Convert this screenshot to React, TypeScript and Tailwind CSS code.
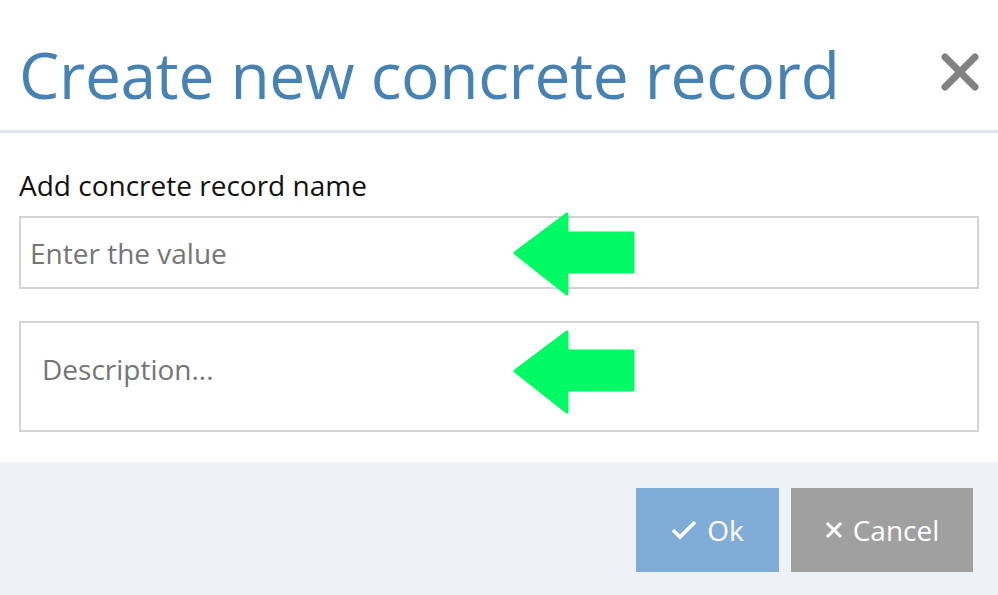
const font = { fontFamily: '"Open Sans", "Liberation Sans", sans-serif' }

function GreenArrow() {
  return (
    <svg width="122" height="84" viewBox="0 0 122 84" className="pointer-events-none">
      <polygon
        points="2,41 54,2 54,21 120,21 120,60 54,60 54,82"
        fill="#00fa64"
        stroke="#00fa64"
        strokeWidth="3"
        strokeLinejoin="round"
      />
    </svg>
  )
}

export default function App() {
  return (
    <div className="w-[998px] h-[595px] bg-white flex flex-col overflow-hidden" style={font}>
      {/* Header */}
      <div className="flex items-start justify-between pl-[19px] pr-[19px] pt-[43px] pb-[23px] border-b-[3px] border-[#e3e4f2]">
        <h1 className="text-[64px] leading-[64px] text-[#4682b4] font-normal tracking-[-0.28px]">
          Create new concrete record
        </h1>
        <button className="mt-[10px]" aria-label="Close">
          <svg width="38" height="38" viewBox="0 0 38 38">
            <path d="M4 4 L34 34 M34 4 L4 34" stroke="#828282" strokeWidth="7" strokeLinecap="round" />
          </svg>
        </button>
      </div>

      {/* Body */}
      <div className="flex flex-col px-[19px] pt-[37px] pb-[30px]">
        <label className="text-[28px] leading-[30px] text-[#111]">Add concrete record name</label>
        <div className="relative mt-[16px]">
          <input
            placeholder="Enter the value"
            className="w-full h-[73px] border-2 border-[#d4d4d4] px-[9px] text-[28px] text-[#333] placeholder:text-[#757575] outline-none"
            style={font}
          />
          <div className="absolute left-[494px] top-[-4px]">
            <GreenArrow />
          </div>
        </div>
        <div className="relative mt-[32px]">
          <textarea
            placeholder="Description..."
            className="block w-full h-[111px] border-2 border-[#d4d4d4] px-[21px] pt-[28px] text-[28px] leading-[36px] text-[#333] placeholder:text-[#757575] outline-none resize-none"
            style={font}
          />
          <div className="absolute left-[494px] top-[9px]">
            <GreenArrow />
          </div>
        </div>
      </div>

      {/* Footer */}
      <div className="flex-1 bg-[#eef1f6] flex justify-end items-start gap-[12px] pt-[26px] pr-[25px]">
        <button className="w-[143px] h-[84px] bg-[#7fadd8] text-white text-[28px] flex items-center justify-center gap-[10px]">
          <svg width="26" height="20" viewBox="0 0 26 20">
            <path d="M2 10 L9 17 L24 2" stroke="white" strokeWidth="3.5" fill="none" />
          </svg>
          <span>Ok</span>
        </button>
        <button className="w-[182px] h-[84px] bg-[#a0a0a0] text-white text-[28px] flex items-center justify-center gap-[10px]">
          <svg width="18" height="18" viewBox="0 0 18 18">
            <path d="M2 2 L16 16 M16 2 L2 16" stroke="white" strokeWidth="3" />
          </svg>
          <span>Cancel</span>
        </button>
      </div>
    </div>
  )
}
